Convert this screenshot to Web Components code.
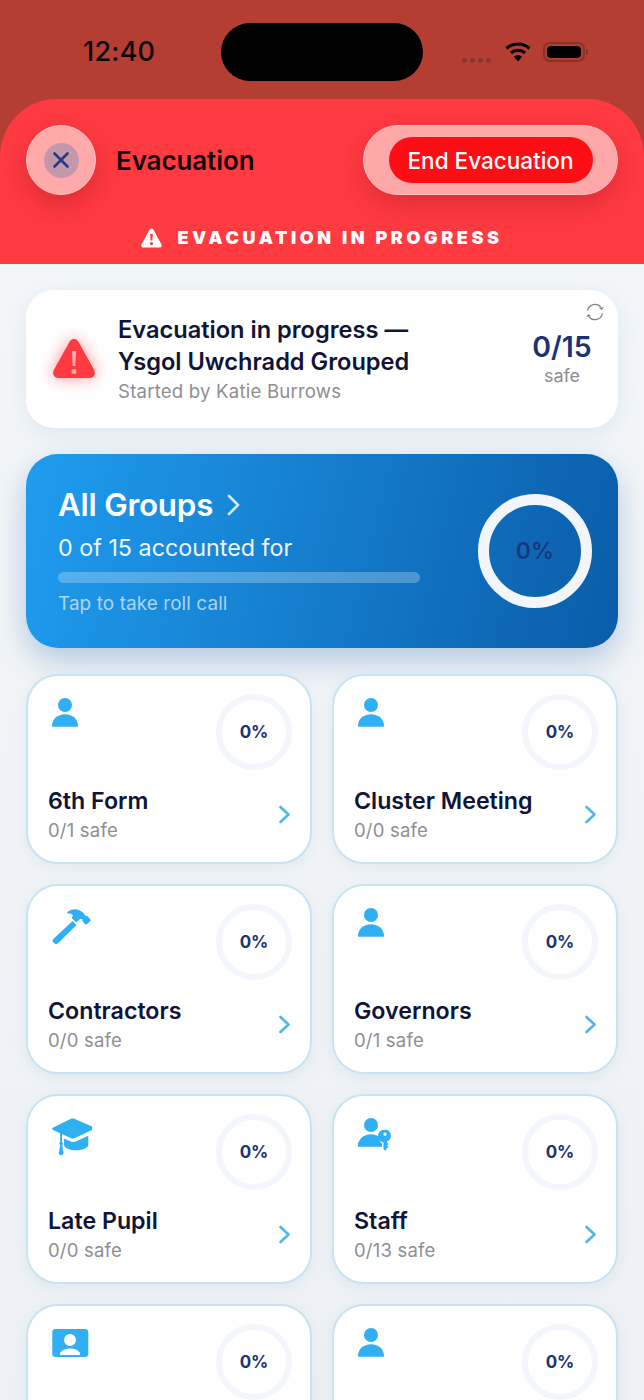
<!DOCTYPE html>
<html lang="en">
<head>
<meta charset="utf-8">
<title>Evacuation</title>
<style>
  html, body { margin: 0; padding: 0; }
  body { width: 644px; height: 1400px; overflow: hidden; font-family: Inter, "Noto Sans", sans-serif; background: #b53e32; }
</style>
</head>
<body>
<evac-screen>
  <evac-status slot="top" time="12:40"></evac-status>
  <evac-header slot="top" title="Evacuation" action="End Evacuation" banner="EVACUATION IN PROGRESS"></evac-header>
  <evac-summary>
    <span slot="title">Evacuation in progress —<br>Ysgol Uwchradd Grouped</span>
    <span slot="sub">Started by Katie Burrows</span>
  </evac-summary>
  <evac-hero name="All Groups" counts="0 of 15 accounted for" hint="Tap to take roll call" percent="0%"></evac-hero>
  <group-grid>
    <group-card icon="person" name="6th Form" safe="0/1 safe"></group-card>
    <group-card icon="person" name="Cluster Meeting" safe="0/0 safe"></group-card>
    <group-card icon="hammer" name="Contractors" safe="0/0 safe"></group-card>
    <group-card icon="person" name="Governors" safe="0/1 safe"></group-card>
    <group-card icon="cap" name="Late Pupil" safe="0/0 safe"></group-card>
    <group-card icon="staff" name="Staff" safe="0/13 safe"></group-card>
    <!-- last row runs off the bottom of the screen, names aren't visible -->
    <group-card icon="badge"></group-card>
    <group-card icon="person"></group-card>
  </group-grid>
</evac-screen>

<script>
// Icons are drawn in a 44x44 box, top-left of each group card.
const GROUP_ICONS = {
  person: `<circle cx="17" cy="12" r="7"/><path d="M4 32.700c0-6.500 5.500-11.500 13-11.500s13 5 13 11.500c0 .6-.4 1-1 1H5c-.6 0-1-.4-1-1z"/>`,
  hammer: `<path d="M5.600 35.700 24.600 18l3.900 4L10 40.300c-1.100 1.100-2.700 1.100-3.900 0l-.7-.7c-1-1.100-.9-2.800.2-3.900z"/>
           <path d="M19.300 9.300c3-3 8-3.800 12-2 2.800 1.200 4.800 3.200 6.200 5.700l1.500-.3 3.400 3.800c.5.500.4 1-.1 1.500l-3.500 3.300c-.5.500-1 .5-1.500 0l-3-3.400.3-1.600-2.600-.3-3.800 3.500-4.500-4.500 1.200-2.500c-.5-1.500-2.400-2.400-4.900-2-.8.100-1.100-.7-.7-1.200z"/>`,
  cap: `<path d="M23 5.800c1-.4 2.300-.4 3.300 0l18.500 8c1.400.6 1.400 2.200 0 2.800l-18.500 8.700c-1 .5-2.300.5-3.300 0L5.200 17c-1.300-.6-1.300-2 0-2.600z"/>
        <path d="M16 25.500l6.700 3c1.600.7 3.300.7 4.900 0l12.700-5.700v9c0 3.500-7 5.500-12 5.500-6 0-12.300-2-12.300-5.500z"/>
        <path d="M12 19.500l.1-1.500 11-2.300c1-.5 2.500 0 2.500 1s-1.500 1.500-2.500 1.200L14 19.700V29l1.200 1.500-1 1.800 1.300 7.500c.2 1.400-1 2.400-2.300 2.400s-2.500-1-2.300-2.400l1.300-7.500-1-1.800 1-1.500z"/>`,
  staff: `<circle cx="17" cy="12" r="7"/><path d="M3.700 33.700c0-7 5.800-12.400 13.300-12.400 3.100 0 5.900.9 8.100 2.500-.2 3 1 5.400 3 6.700v3.200z"/>
          <path fill-rule="evenodd" d="M31 16.800a6 6 0 0 1 2 11.600v1.200l1.500 1.500-1.500 1.300 1.500 1.300-1.500 1.500-1.500 2.500-2-1.500v-6.800a6 6 0 0 1 1.500-12.600zm0 2.700a1.700 1.700 0 1 0 0 3.400 1.700 1.700 0 0 0 0-3.400z"/>`,
  badge: `<path fill-rule="evenodd" d="M7.300 6h30c1.700 0 3 1.300 3 3v22c0 1.700-1.300 3-3 3h-30c-1.700 0-3-1.300-3-3V9c0-1.700 1.300-3 3-3zM22 11a6 6 0 1 0 0 12 6 6 0 0 0 0-12zm-8.800 21h17.600c1 0 1.500-.6 1.300-1.600C31 27.500 27 25.500 22.300 25.500c-4.700 0-9 2-10.400 4.900-.4 1 .3 1.600 1.300 1.600z"/>`,
}

class EvacScreen extends HTMLElement {
  constructor() {
    super()
    this.attachShadow({ mode: 'open' }).innerHTML = `
      <style>
        :host { display: block; width: 644px; height: 1400px; overflow: hidden; }
        main {
          display: flex; flex-direction: column; gap: 26px;
          padding: 26px 26px 0;
          background: linear-gradient(180deg, #f2f6f9 0%, #edf1f5 100%);
          height: 1136px; box-sizing: border-box; overflow: hidden;
        }
        ::slotted(*) { flex: none; }
      </style>
      <slot name="top"></slot>
      <main><slot></slot></main>
    `
  }
}

class EvacStatus extends HTMLElement {
  constructor() {
    super()
    this.attachShadow({ mode: 'open' }).innerHTML = `
      <style>
        :host {
          display: grid; grid-template-columns: 221px 202px 1fr; height: 99px;
          background: #b53e32; color: #0b0606;
        }
        .time { padding: 34px 0 0 83px; font: 500 27px/36px Inter, sans-serif; letter-spacing: .2px; }
        .island { margin-top: 23px; height: 58px; border-radius: 29px; background: #000; }
        .icons { display: flex; align-items: flex-start; padding: 41px 0 0 39px; }
        .dots { display: flex; gap: 3px; margin: 17px 14px 0 0; }
        .dots i { width: 5px; height: 5px; border-radius: 50%; background: #8c332a; }
        .wifi { width: 26px; height: 21px; margin-right: 12px; }
        .bat {
          width: 42px; height: 20px; box-sizing: border-box; border: 2px solid #8a3027;
          border-radius: 7px; padding: 2px; margin-top: 1px;
        }
        .bat b { display: block; height: 100%; background: #000; border-radius: 4px; }
        .cap { width: 2px; height: 6px; margin: 8px 0 0 1px; background: #8a3027; border-radius: 0 2px 2px 0; }
      </style>
      <div class="time"></div>
      <div class="island"></div>
      <div class="icons">
        <span class="dots"><i></i><i></i><i></i><i></i></span>
        <svg class="wifi" viewBox="0 0 26 21"><g fill="none" stroke="#000" stroke-width="3.200"><path d="M1.500 7.500c6.500-6 16.500-6 23 0"/><path d="M6 12c4-3.700 10-3.700 14 0"/></g><path d="M13 20.500 8.800 15.800c2.400-2 6-2 8.400 0z"/></svg>
        <span class="bat"><b></b></span><span class="cap"></span>
      </div>
    `
    this.shadowRoot.querySelector('.time').textContent = this.getAttribute('time')
  }
}

class EvacHeader extends HTMLElement {
  constructor() {
    super()
    this.attachShadow({ mode: 'open' }).innerHTML = `
      <style>
        :host { display: block; height: 165px; background: #b53e32; }
        .sheet {
          box-sizing: border-box; height: 165px; padding: 26px 26px 0;
          border-radius: 56px 56px 0 0 / 58px 58px 0 0;
          background: #ff3a41;
          display: flex; flex-direction: column;
        }
        .row { display: flex; align-items: center; height: 70px; }
        .close {
          width: 70px; height: 70px; border-radius: 50%; box-sizing: border-box;
          background: #ffa9ab; border: 1px solid #ffc4c5;
          box-shadow: 0 10px 26px rgba(130, 10, 15, .28);
          display: flex; align-items: center; justify-content: center; flex: none;
        }
        .close span {
          width: 35px; height: 35px; border-radius: 50%; background: #c298aa;
          display: flex; align-items: center; justify-content: center;
        }
        h1 { flex: 1; margin: 0 0 0 20px; padding-top: 2px; font: 600 26px/32px Inter, sans-serif; color: #14060a; letter-spacing: -.1px; }
        .end {
          width: 255px; height: 70px; border-radius: 35px; box-sizing: border-box;
          background: #ffa8aa; border: 1px solid #ffc0c1;
          box-shadow: 0 10px 26px rgba(130, 10, 15, .25);
          display: flex; align-items: center; justify-content: center;
        }
        .end span {
          width: 204px; height: 46px; border-radius: 23px; background: #ff0d14; color: #fff;
          font: 500 22.500px/47px Inter, sans-serif; text-align: center;
        }
        .banner {
          display: flex; align-items: center; justify-content: center; gap: 15px;
          margin-top: 30px; color: #fff;
          font: 900 18px/26px Inter, sans-serif; letter-spacing: 3.600px;
        }
      </style>
      <div class="sheet">
        <div class="row">
          <div class="close"><span><svg width="18" height="18" viewBox="0 0 18 18"><path d="M2.500 2.500l13 13M15.500 2.500l-13 13" stroke="#233a80" stroke-width="2.600" stroke-linecap="round"/></svg></span></div>
          <h1></h1>
          <div class="end"><span></span></div>
        </div>
        <div class="banner">
          <svg width="21" height="20" viewBox="0 0 21 20"><path fill-rule="evenodd" d="M10.500.5c.8 0 1.500.4 2 1.300l7.900 14.500c.8 1.500-.1 3.200-1.900 3.200H2.500C.7 19.500-.2 17.800.6 16.300L8.500 1.800C9 .9 9.700.5 10.500.500zM9.200 6l.4 6.500h1.800l.4-6.500zm1.300 8a1.600 1.600 0 1 0 0 3.200 1.600 1.600 0 0 0 0-3.200z" fill="#fff"/></svg>
          <span class="txt"></span>
        </div>
      </div>
    `
    const $ = s => this.shadowRoot.querySelector(s)
    $('h1').textContent = this.getAttribute('title')
    $('.end span').textContent = this.getAttribute('action')
    $('.txt').textContent = this.getAttribute('banner')
  }
}

class EvacSummary extends HTMLElement {
  constructor() {
    super()
    this.attachShadow({ mode: 'open' }).innerHTML = `
      <style>
        :host {
          display: flex; align-items: center; position: relative;
          box-sizing: border-box; height: 138px; padding: 0 26px;
          border-radius: 28px; background: #fff;
          box-shadow: 0 6px 22px rgba(120, 150, 185, .14);
        }
        .warn { flex: none; width: 44px; height: 42px; margin-right: 22px; filter: drop-shadow(0 0 8px rgba(255, 50, 60, .55)); }
        .text { flex: 1; }
        .title { font: 600 23.600px/32px Inter, sans-serif; color: #0f1438; }
        .sub { font: 400 18.600px/26px Inter, sans-serif; color: #8e8e93; letter-spacing: .2px; }
        .count { text-align: center; width: 62px; margin-right: -1px; }
        .count b { display: block; font: 600 28.500px/34px Inter, sans-serif; color: #1c3372; }
        .count span { font: 400 18px/24px Inter, sans-serif; color: #8e8e93; }
        .sync { position: absolute; top: 11px; right: 12px; }
      </style>
      <svg class="warn" viewBox="0 0 44 42"><path fill-rule="evenodd" d="M22 1c2 0 3.500 1 4.600 3L42.200 32c1.900 3.700-.2 8-4.200 8H6C2 40-.1 35.700 1.800 32L17.400 4C18.500 2 20 1 22 1zm-2 12 .7 15h2.600l.7-15zm2 18a2.500 2.500 0 1 0 0 5 2.500 2.500 0 0 0 0-5z" fill="#ff3a41"/></svg>
      <div class="text">
        <div class="title"><slot name="title"></slot></div>
        <div class="sub"><slot name="sub"></slot></div>
      </div>
      <div class="count"><b>0/15</b><span>safe</span></div>
      <svg class="sync" width="22" height="22" viewBox="0 0 22 22" fill="none" stroke="#7d7f86" stroke-width="1.300"><path d="M3.600 9.500A7.600 7.600 0 0 1 17 6.200"/><path d="M18.400 12.500A7.600 7.600 0 0 1 5 15.800"/><path d="M19.800 6.300l-2.200 2.700-2.700-2.300z" fill="#7d7f86" stroke="none"/><path d="M2.200 15.700l2.200-2.700 2.700 2.300z" fill="#7d7f86" stroke="none"/></svg>
    `
  }
}

class EvacHero extends HTMLElement {
  constructor() {
    super()
    this.attachShadow({ mode: 'open' }).innerHTML = `
      <style>
        :host {
          display: flex; align-items: center;
          box-sizing: border-box; height: 194px; padding: 0 26px 0 32px;
          border-radius: 32px; color: #fff;
          background: linear-gradient(104deg, #1f9df0 0%, #0a5ca8 100%);
          box-shadow: 0 12px 30px rgba(40, 100, 170, .3);
        }
        .left { flex: 1; margin-top: -1px; }
        .name { display: flex; align-items: center; gap: 14px; font: 600 31.300px/40px Inter, sans-serif; letter-spacing: -.2px; }
        .counts { font: 400 23.300px/32px Inter, sans-serif; margin-top: 7px; color: #eef6fd; }
        .bar { width: 362px; height: 11px; border-radius: 6px; background: rgba(255, 255, 255, .25); margin-top: 8px; }
        .hint { font: 400 18.900px/26px Inter, sans-serif; color: rgba(255, 255, 255, .65); margin-top: 8px; letter-spacing: .1px; }
        .ring {
          flex: none; width: 114px; height: 114px; border-radius: 50%; box-sizing: border-box;
          border: 11px solid #f2f6fb; display: flex; align-items: center; justify-content: center;
          font: 600 23px/30px Inter, sans-serif; color: #17377f;
        }
      </style>
      <div class="left">
        <div class="name"><span class="n"></span><svg width="13" height="22" viewBox="0 0 13 22" fill="none" stroke="#d6e9f8" stroke-width="2.600" stroke-linecap="round" stroke-linejoin="round"><path d="M2 2l9 9-9 9"/></svg></div>
        <div class="counts"></div>
        <div class="bar"></div>
        <div class="hint"></div>
      </div>
      <div class="ring"></div>
    `
    const $ = s => this.shadowRoot.querySelector(s)
    $('.n').textContent = this.getAttribute('name')
    $('.counts').textContent = this.getAttribute('counts')
    $('.hint').textContent = this.getAttribute('hint')
    $('.ring').textContent = this.getAttribute('percent')
  }
}

class GroupGrid extends HTMLElement {
  constructor() {
    super()
    this.attachShadow({ mode: 'open' }).innerHTML = `
      <style>
        :host { display: grid; grid-template-columns: 286px 286px; gap: 20px; }
      </style>
      <slot></slot>
    `
  }
}

class GroupCard extends HTMLElement {
  constructor() {
    super()
    const icon = GROUP_ICONS[this.getAttribute('icon')] || GROUP_ICONS.person
    this.attachShadow({ mode: 'open' }).innerHTML = `
      <style>
        :host {
          display: flex; flex-direction: column; justify-content: space-between;
          box-sizing: border-box; height: 190px; padding: 18px 18px 17px 20px;
          border: 2px solid #c8e4f2; border-radius: 32px; background: #fff;
          box-shadow: 0 4px 14px rgba(120, 150, 185, .10);
        }
        .top { display: flex; justify-content: space-between; align-items: flex-start; }
        .top svg { width: 44px; height: 44px; fill: #30b0f2; margin-top: -1px; }
        .ring {
          width: 76px; height: 76px; border-radius: 50%; box-sizing: border-box;
          border: 6px solid #f3f6fa; display: flex; align-items: center; justify-content: center;
          font: 700 17px/22px Inter, sans-serif; color: #1c3372;
        }
        .bottom { display: flex; align-items: center; justify-content: space-between; }
        .name { font: 600 23.200px/30px Inter, sans-serif; color: #0f1438; min-height: 30px; margin-bottom: -1px; }
        .safe { font: 400 18.500px/30px Inter, sans-serif; color: #8e8e93; letter-spacing: .2px; min-height: 30px; }
        .chev { margin: 0 1px 3px 0; }
      </style>
      <div class="top">
        <svg viewBox="0 0 44 44">${icon}</svg>
        <div class="ring">0%</div>
      </div>
      <div class="bottom">
        <div><div class="name"></div><div class="safe"></div></div>
        <svg class="chev" width="13" height="19" viewBox="0 0 13 19" fill="none" stroke="#4db8ec" stroke-width="2.600" stroke-linecap="round" stroke-linejoin="round"><path d="M2.500 2l8 7.500-8 7.500"/></svg>
      </div>
    `
    this.shadowRoot.querySelector('.name').textContent = this.getAttribute('name') || ''
    this.shadowRoot.querySelector('.safe').textContent = this.getAttribute('safe') || ''
  }
}

customElements.define('evac-screen', EvacScreen)
customElements.define('evac-status', EvacStatus)
customElements.define('evac-header', EvacHeader)
customElements.define('evac-summary', EvacSummary)
customElements.define('evac-hero', EvacHero)
customElements.define('group-grid', GroupGrid)
customElements.define('group-card', GroupCard)
</script>
</body>
</html>
